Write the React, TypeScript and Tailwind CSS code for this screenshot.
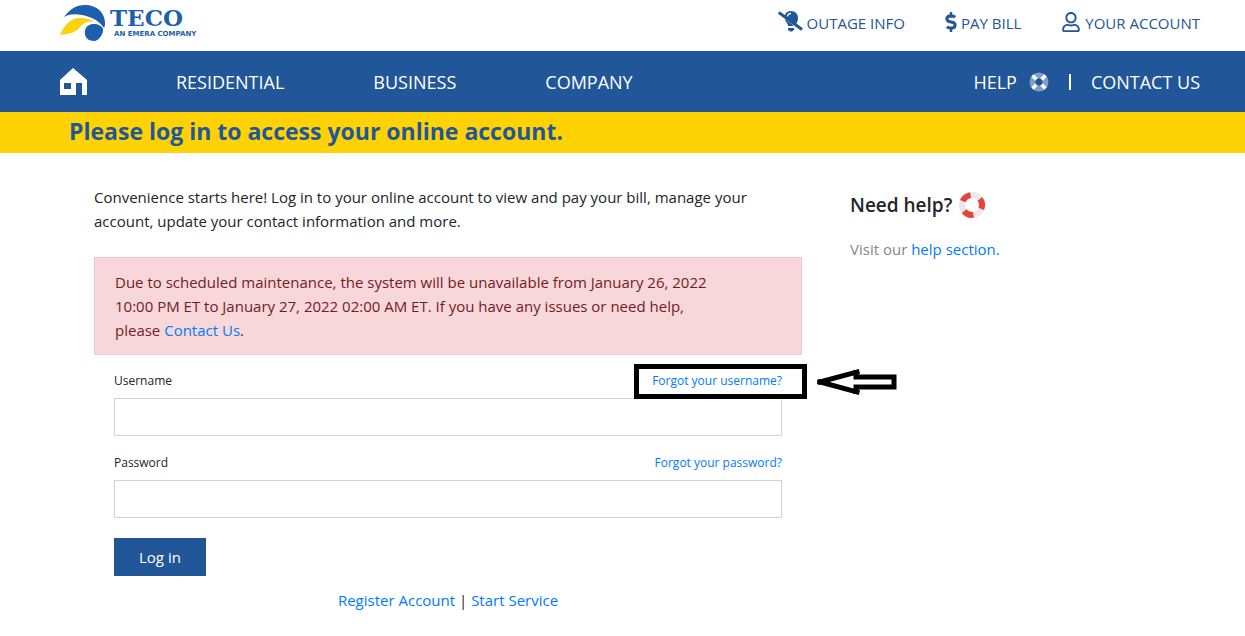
import type { ReactNode } from 'react'
import { FaDollarSign, FaRegUser } from 'react-icons/fa'

function Logo() {
  return (
    <a href="#" aria-label="TECO, an Emera company" className="flex items-center">
      <svg viewBox="0 0 46 36" className="h-9 w-[46px]" aria-hidden="true">
        <path
          d="M4 12C10 4 16 0 25 0c12 0 20 8 20 18 0 2 0 3-1 5-4-6-9-9-15-11C21 9 11 8 4 12Z"
          fill="#1b5fae"
        />
        <path d="M0 30c4-10 11-17 20-17 6 0 10 1 14 4-6-1-10 0-13 4-4 6-11 8-21 9Z" fill="#fdd20a" />
        <path d="M25 26c1-5 4-7 9-7 4 0 8 2 9 5 1 4-4 12-9 12-6 0-10-4-9-10Z" fill="#1b5fae" />
      </svg>
      <span className="flex flex-col pl-1">
        <span className="font-['DejaVu_Serif',serif] text-[23px] font-bold leading-5 text-[#1b5fae]">TECO</span>
        <span className="mt-0.5 whitespace-nowrap pl-1 font-['DejaVu_Sans',sans-serif] text-[7px] font-bold leading-2 text-[#1b5fae]">
          AN EMERA COMPANY
        </span>
      </span>
    </a>
  )
}

function OutageIcon() {
  return (
    <svg viewBox="0 0 25 21" className="h-[21px] w-[25px]" fill="#215699" aria-hidden="true">
      <path d="M7 4C8 1 10 0 13 0c4 0 7 3 7 7 0 3-1 5-3 7L7 5Z" />
      <path d="M7 8l8 6v1h-5c0-3-3-4-3-7ZM10 17h6v2l-2 1.500h-2L10 19v-2Z" />
      <path d="M9.500 5.500c0-2 1.500-3 3.500-3" fill="none" stroke="#fff" strokeWidth="1.300" />
      <path d="M.8 1.500l23.200 17" stroke="#215699" strokeWidth="3" />
    </svg>
  )
}

function HomeIcon() {
  return (
    <svg viewBox="0 0 27 27" className="h-[27px] w-[27px]" aria-hidden="true">
      <path fillRule="evenodd" d="M13 0 27 12v15h-5V15h-6v12H0V12L13 0ZM4 15v6h7v-6H4Z" fill="#fff" />
    </svg>
  )
}

function HelpRing() {
  return (
    <svg viewBox="0 0 20 20" className="size-5" aria-hidden="true">
      <circle cx="10" cy="10" r="6.5" fill="none" stroke="#7f9dc6" strokeWidth="6" />
      <path
        d="M3.500 3.500l4 4M16.500 3.500l-4 4M3.500 16.500l4-4M16.500 16.500l-4-4"
        stroke="#fff"
        strokeWidth="3.500"
      />
      <circle cx="10" cy="10" r="3.300" fill="#215699" />
    </svg>
  )
}

function LifeBuoy() {
  return (
    <svg viewBox="0 0 28 28" className="size-7" aria-hidden="true">
      <circle cx="14" cy="14" r="10" fill="none" stroke="#e9e9e9" strokeWidth="6" />
      <circle
        cx="14"
        cy="14"
        r="10"
        fill="none"
        stroke="#e8423f"
        strokeWidth="6"
        pathLength="360"
        strokeDasharray="60 60"
        transform="rotate(-38 14 14)"
      />
    </svg>
  )
}

function TopLink({ icon, children }: { icon: ReactNode; children: ReactNode }) {
  return (
    <a href="#" className="flex items-center gap-1 whitespace-nowrap text-[#215699]">
      {icon}
      <span className="pt-[3px]">{children}</span>
    </a>
  )
}

function Field({ id, label, type, children }: { id: string; label: string; type: string; children: ReactNode }) {
  return (
    <div>
      <div className="flex h-[22px] items-center justify-between text-xs leading-6">
        <label htmlFor={id}>{label}</label>
        {children}
      </div>
      <input id={id} type={type} className="mt-1.5 block h-[38px] w-full border border-[#ced4da] bg-white px-3 outline-none" />
    </div>
  )
}

export default function App() {
  return (
    <div className="min-h-screen bg-white font-['Open_Sans',sans-serif] text-[15px] leading-6 text-[#212529]">
      <header>
        <div className="flex items-start justify-between pb-2.5 pl-[60px] pr-[45px] pt-[5px]">
          <Logo />
          <div className="flex items-center gap-10 pt-[3px]">
            <TopLink icon={<OutageIcon />}>OUTAGE INFO</TopLink>
            <TopLink icon={<FaDollarSign className="-mx-1 size-5" />}>PAY BILL</TopLink>
            <TopLink icon={<FaRegUser className="size-5" />}>YOUR ACCOUNT</TopLink>
          </div>
        </div>
        <nav className="flex h-[61px] items-center justify-between bg-[#215699] pl-[60px] pr-[45px] text-lg text-white">
          <div className="flex items-center gap-[89px]">
            <a href="#" aria-label="Home"><HomeIcon /></a>
            <a href="#">RESIDENTIAL</a>
            <a href="#">BUSINESS</a>
            <a href="#">COMPANY</a>
          </div>
          <div className="flex items-center">
            <a href="#" className="flex items-center gap-3">HELP <HelpRing /></a>
            <span className="mx-5 h-4 w-0.5 bg-white" />
            <a href="#">CONTACT US</a>
          </div>
        </nav>
      </header>

      <h1 className="bg-[#ffd204] px-[69px] pb-1.5 pt-[3px] text-[23px] font-bold leading-8 text-[#215699]">
        Please log in to access your online account.
      </h1>

      <main className="flex gap-12 pl-[94px] pr-10 pt-8">
        <section className="w-[708px]">
          <p className="pr-8">
            Convenience starts here! Log in to your online account to view and pay your bill, manage your account, update
            your contact information and more.
          </p>
          <div role="alert" className="mt-6 border border-[#f5c6cb] bg-[#f8d7da] py-3 pl-5 pr-[72px] text-[#721c24]">
            Due to scheduled maintenance, the system will be unavailable from January 26, 2022 10:00 PM ET to January 27,
            2022 02:00 AM ET. If you have any issues or need help, please{' '}
            <a href="#" className="text-[#007bff]">Contact Us</a>.
          </div>
          <form className="px-5 pt-[15px]" onSubmit={(e) => e.preventDefault()}>
            <div className="flex flex-col gap-4">
              <Field id="username" label="Username" type="text">
                <span className="relative">
                  <a href="#" className="text-[#007bff]">Forgot your username?</a>
                  <span className="pointer-events-none absolute -left-[18px] -right-[25px] -top-[5px] h-[35px] border-[5px] border-black" />
                  <svg
                    viewBox="0 0 84 28"
                    className="pointer-events-none absolute -top-px left-full ml-8 h-7 w-[84px]"
                    fill="none"
                    stroke="#000"
                    strokeWidth="5"
                    aria-hidden="true"
                  >
                    <path d="M6 14 43 4" strokeLinecap="square" />
                    <path d="M6 14 43 24" strokeLinecap="square" />
                    <path d="M42 2v7h38v10H42v7" />
                  </svg>
                </span>
              </Field>
              <Field id="password" label="Password" type="password">
                <a href="#" className="text-[#007bff]">Forgot your password?</a>
              </Field>
            </div>
            <button type="submit" className="mt-5 block h-[38px] bg-[#215699] px-[25px] text-white">Log in</button>
          </form>
          <p className="mt-3 text-center">
            <a href="#" className="text-[#007bff]">Register Account</a> |{' '}
            <a href="#" className="text-[#007bff]">Start Service</a>
          </p>
        </section>
        <aside className="pt-1">
          <h2 className="flex items-center gap-1.5 text-[19px] font-semibold leading-8">
            Need help? <LifeBuoy />
          </h2>
          <p className="mt-4 text-[#868686]">
            Visit our <a href="#" className="text-[#007bff]">help section.</a>
          </p>
        </aside>
      </main>
    </div>
  )
}
